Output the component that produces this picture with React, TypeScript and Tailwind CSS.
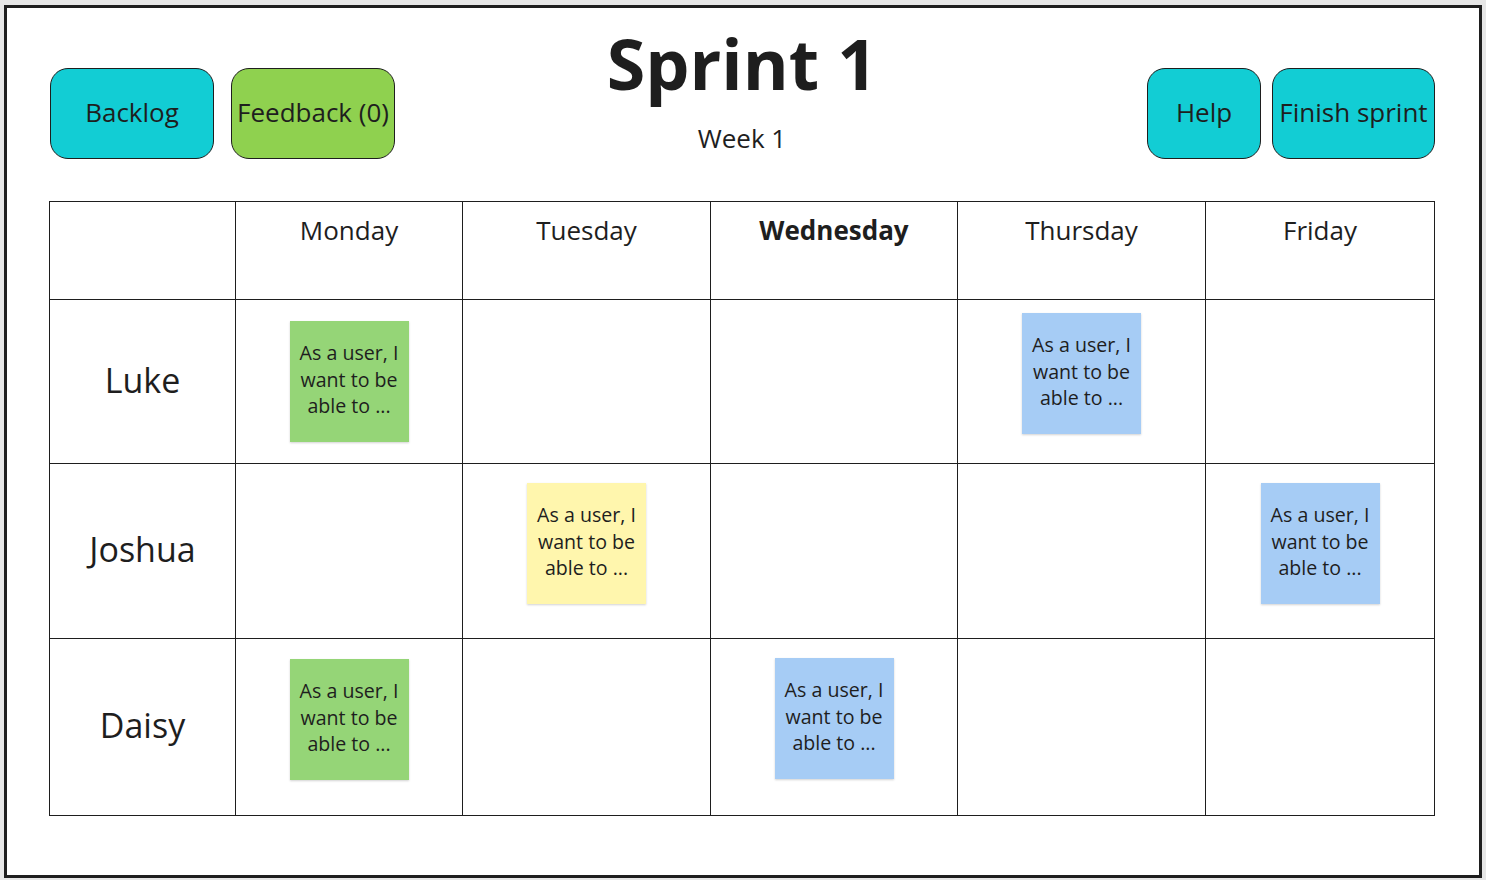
import React from "react";

type Note = { color: string; mt: number } | null;

const days = ["Monday", "Tuesday", "Wednesday", "Thursday", "Friday"];
const colW = ["w-[185px]", "w-[226px]", "w-[247px]", "w-[246px]", "w-[247px]", "w-[228px]"];

const GREEN = "bg-[#95d577]";
const BLUE = "bg-[#a6ccf5]";
const YELLOW = "bg-[#fff6ad]";

const rows: { name: string; h: string; notes: Note[] }[] = [
  {
    name: "Luke",
    h: "h-[163px]",
    notes: [{ color: GREEN, mt: 21 }, null, null, { color: BLUE, mt: 13 }, null],
  },
  {
    name: "Joshua",
    h: "h-[174px]",
    notes: [null, { color: YELLOW, mt: 19 }, null, null, { color: BLUE, mt: 19 }],
  },
  {
    name: "Daisy",
    h: "h-[176px]",
    notes: [{ color: GREEN, mt: 20 }, null, { color: BLUE, mt: 19 }, null, null],
  },
];

function Sticky({ color, mt }: { color: string; mt: number }) {
  return (
    <div
      className={`${color} w-[119px] h-[121px] flex items-center justify-center pb-[3px] text-center text-[19.6px] leading-[26.5px] text-[#1e1e1e] shadow-[0_1px_2px_rgba(0,0,0,0.18)]`}
      style={{ marginTop: mt }}
    >
      <div>
        As a user, I
        <br />
        want to be
        <br />
        able to ...
      </div>
    </div>
  );
}

function Btn({ label, w, color }: { label: string; w: string; color: string }) {
  return (
    <div
      className={`${w} ${color} h-[91px] rounded-[18px] border border-[#1e1e1e] flex items-center justify-center pb-[3px] text-[26px] text-[#1e1e1e] whitespace-nowrap`}
    >
      {label}
    </div>
  );
}

export default function App() {
  return (
    <div
      className="w-[1486px] h-[880px] bg-[#e6e6e6] pt-[5px] pl-[4px] pr-[4px] pb-[2px]"
      style={{ fontFamily: '"Open Sans", "Noto Sans", sans-serif' }}
    >
      <div className="h-full border-[3px] border-[#1e1e1e] bg-white pl-[42px] pr-[44px]">
        {/* Header */}
        <div className="h-[193px] grid grid-cols-[1fr_auto_1fr] items-start">
          <div className="flex gap-[17px] ml-[1px] mt-[60px]">
            <Btn label="Backlog" w="w-[164px]" color="bg-[#12cdd4]" />
            <Btn label="Feedback (0)" w="w-[164px]" color="bg-[#8fd14f]" />
          </div>
          <div className="flex flex-col items-center pt-[19px] text-[#1e1e1e]">
            <div className="text-[70px] font-bold leading-[72px]">Sprint 1</div>
            <div className="text-[26px] leading-[32px] mt-[23px]">Week 1</div>
          </div>
          <div className="flex gap-[11px] justify-end mt-[60px]">
            <Btn label="Help" w="w-[114px]" color="bg-[#12cdd4]" />
            <Btn label="Finish sprint" w="w-[163px]" color="bg-[#12cdd4]" />
          </div>
        </div>

        {/* Table */}
        <div className="inline-flex flex-col gap-px p-px bg-[#1e1e1e]">
          <div className="flex gap-px h-[97px]">
            <div className={`${colW[0]} bg-white`} />
            {days.map((d, i) => (
              <div
                key={d}
                className={`${colW[i + 1]} bg-white pt-[12px] text-center text-[26px] leading-[32px] text-[#1e1e1e] ${
                  d === "Wednesday" ? "font-bold" : ""
                }`}
              >
                {d}
              </div>
            ))}
          </div>
          {rows.map((r) => (
            <div key={r.name} className={`flex gap-px ${r.h}`}>
              <div
                className={`${colW[0]} bg-white flex items-center justify-center pb-[3px] text-[34px] text-[#1e1e1e]`}
              >
                {r.name}
              </div>
              {r.notes.map((n, i) => (
                <div key={i} className={`${colW[i + 1]} bg-white flex justify-center items-start`}>
                  {n && <Sticky color={n.color} mt={n.mt} />}
                </div>
              ))}
            </div>
          ))}
        </div>
      </div>
    </div>
  );
}
